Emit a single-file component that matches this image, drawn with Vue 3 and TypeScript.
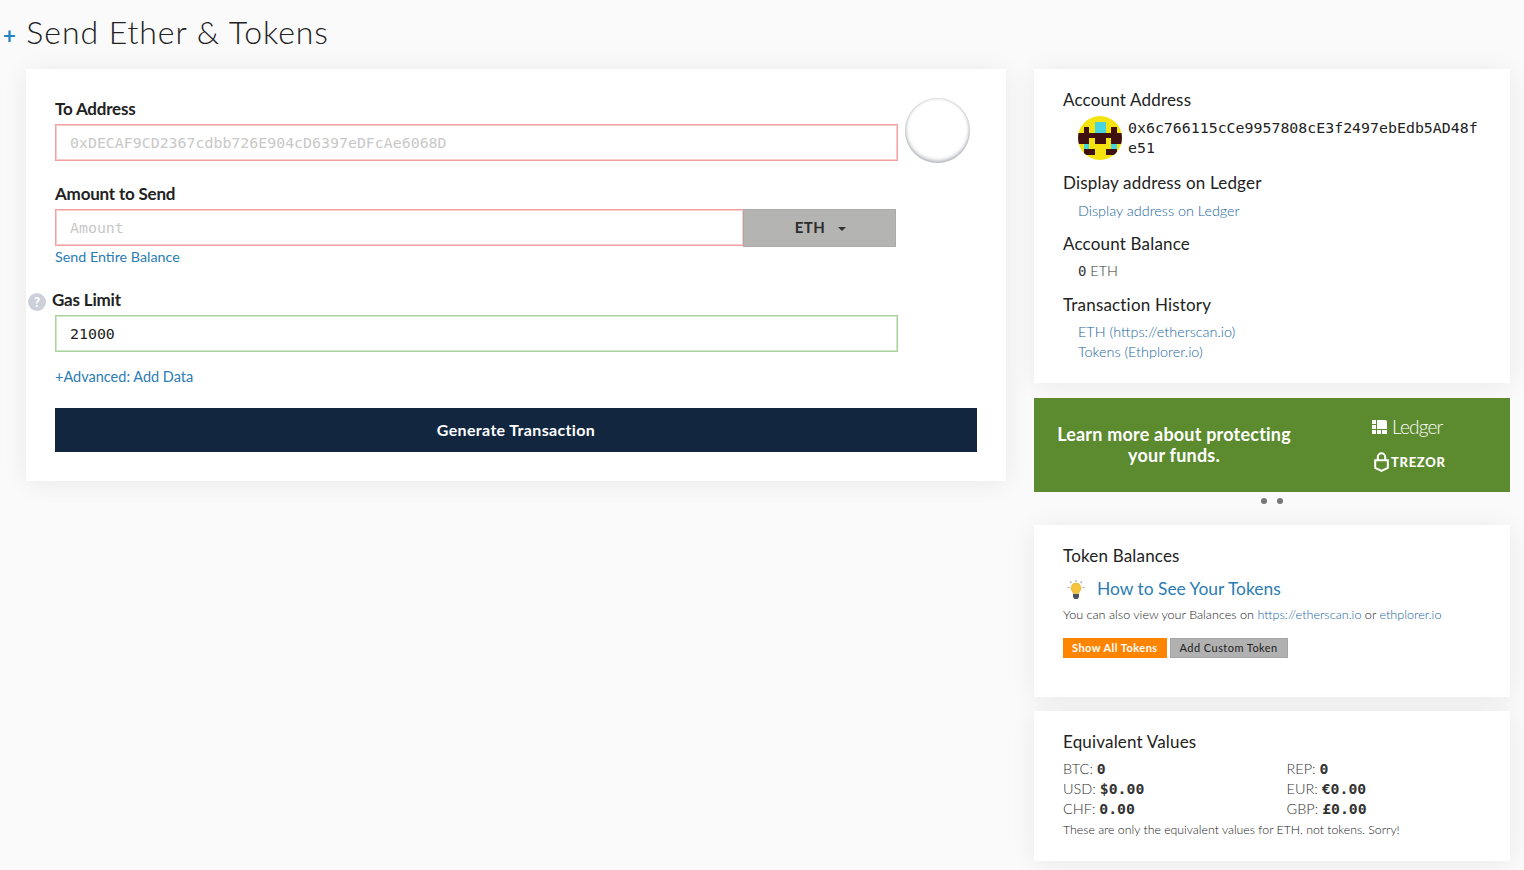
<template>
  <div class="page">
    <h1 class="title"><span class="plus">+</span> Send Ether &amp; Tokens</h1>
    <div class="columns">
      <main class="card send">
        <label class="label">To Address</label>
        <div class="address-row">
          <div class="input bad mono placeholder">0xDECAF9CD2367cdbb726E904cD6397eDFcAe6068D</div>
          <div class="empty-identicon"></div>
        </div>

        <label class="label amount-label">Amount to Send</label>
        <div class="amount-row">
          <div class="input bad mono placeholder grow">Amount</div>
          <button class="unit">ETH <span class="caret"></span></button>
        </div>
        <a class="link entire">Send Entire Balance</a>

        <div class="gas-label">
          <span class="help">?</span>
          <label class="label">Gas Limit</label>
        </div>
        <div class="input good mono">21000</div>
        <a class="link advanced">+Advanced: Add Data</a>

        <button class="generate">Generate Transaction</button>
      </main>

      <aside class="side">
        <section class="card panel account">
          <h5>Account Address</h5>
          <div class="address">
            <svg class="identicon" viewBox="0 0 8 8" shape-rendering="crispEdges">
              <defs><clipPath id="ic"><circle cx="4" cy="4" r="4" /></clipPath></defs>
              <g clip-path="url(#ic)">
                <rect width="8" height="8" fill="#f4e30e" />
                <rect v-for="(c, i) in cells" :key="i" :x="c[0]" :y="c[1]" :width="c[2]" :height="c[3]" :fill="c[4]" />
              </g>
            </svg>
            <span class="mono addr-text">0x6c766115cCe9957808cE3f2497ebEdb5AD48fe51</span>
          </div>
          <h5 class="mt1">Display address on Ledger</h5>
          <p class="indent"><a class="link thin">Display address on Ledger</a></p>
          <h5 class="mt2">Account Balance</h5>
          <p class="indent balance"><b class="mono">0</b> ETH</p>
          <h5 class="mt3">Transaction History</h5>
          <p class="indent hist"><a class="link thin">ETH (https://etherscan.io)</a><br /><a class="link thin">Tokens (Ethplorer.io)</a></p>
        </section>

        <section class="banner">
          <div class="banner-text">Learn more about protecting your funds.</div>
          <div class="banner-logos">
            <div class="ledger">
              <svg width="16" height="14" viewBox="0 0 16 14" fill="#fff">
                <rect x="0" y="0" width="4" height="4" /><rect x="0" y="5" width="4" height="4" /><rect x="0" y="10" width="4" height="4" />
                <rect x="5" y="10" width="4" height="4" /><rect x="10" y="10" width="5" height="4" />
                <path d="M5 0h8a2 2 0 0 1 2 2v7H5z" />
              </svg>
              <span>Ledger</span>
            </div>
            <div class="trezor">
              <svg width="15" height="20" viewBox="0 0 15 20" fill="none" stroke="#fff" stroke-width="2">
                <path d="M3.800 8V5a3.700 3.700 0 0 1 7.400 0v3" />
                <path d="M1.200 8.200h12.600v7.600l-6.300 3-6.300-3z" />
              </svg>
              <span>TREZOR</span>
            </div>
          </div>
        </section>
        <div class="dots"><i></i><i></i></div>

        <section class="card panel tokens">
          <h5>Token Balances</h5>
          <div class="howto">
            <svg class="bulb" width="18" height="20" viewBox="0 0 18 20">
              <g stroke="#a9a9a6" stroke-width="1.200"><path d="M9 0v2M3 1.500l1.500 1.500M15 1.500l-1.500 1.500M0.500 7.500h2M15.500 7.500h2" /></g>
              <path d="M9 3a5 5 0 0 1 3 9v1.500H6V12a5 5 0 0 1 3-9z" fill="#f5c33c" stroke="#d9a92a" stroke-width=".5" />
              <path d="M6 14h6v3l-1.500 2h-3L6 17z" fill="#4a5560" />
            </svg>
            <a class="link howto-link">How to See Your Tokens</a>
          </div>
          <p class="small">You can also view your Balances on <a class="link thin">https://etherscan.io</a> or <a class="link thin">ethplorer.io</a></p>
          <div class="token-btns">
            <button class="btn-orange">Show All Tokens</button>
            <button class="btn-grey">Add Custom Token</button>
          </div>
        </section>

        <section class="card panel equiv">
          <h5>Equivalent Values</h5>
          <ul class="values">
            <li v-for="v in values" :key="v.name">{{ v.name }}: <b class="mono">{{ v.amount }}</b></li>
          </ul>
          <p class="small sorry">These are only the equivalent values for ETH, not tokens. Sorry!</p>
        </section>
      </aside>
    </div>
  </div>
</template>

<script setup lang="ts">
type Cell = [number, number, number, number, string];

const dark = '#3f1010';
const cyan = '#45d6e0';

const cells: Cell[] = [
  [3, 1, 2, 2, cyan],
  [1, 2, 1, 1, dark],
  [6, 2, 1, 1, dark],
  [0, 3, 8, 1, dark],
  [0, 4, 2, 1, dark],
  [3, 4, 2, 1, dark],
  [6, 4, 2, 1, dark],
  [1, 5, 1, 1, cyan],
  [6, 5, 1, 1, cyan],
  [1, 6, 2, 1, dark],
  [5, 6, 2, 1, dark],
];

const values = [
  { name: 'BTC', amount: '0' },
  { name: 'REP', amount: '0' },
  { name: 'USD', amount: '$0.00' },
  { name: 'EUR', amount: '€0.00' },
  { name: 'CHF', amount: '0.00' },
  { name: 'GBP', amount: '£0.00' },
];
</script>

<style>
html,
body {
  margin: 0;
  background: #fafafa;
}
</style>

<style scoped>
.page {
  width: 1524px;
  height: 870px;
  overflow: hidden;
  box-sizing: border-box;
  font-family: Lato, sans-serif;
  color: #333;
  background: #fafafa;
}
.title {
  margin: 0;
  height: 69px;
  padding: 11px 0 0 3px;
  box-sizing: border-box;
  font-size: 32px;
  line-height: 42px;
  font-weight: 300;
  letter-spacing: 0.95px;
  color: #222;
}
.plus {
  color: #1f85c0;
  font-size: 22px;
  font-weight: 700;
}
.columns {
  display: flex;
  align-items: flex-start;
  gap: 28px;
  padding-left: 26px;
}
.card {
  background: #fff;
  box-shadow: 0 2px 24px rgba(0, 0, 0, 0.07);
}
.send {
  width: 980px;
  height: 412px;
  box-sizing: border-box;
  padding: 29px 29px 0;
}
.label {
  display: block;
  font-size: 17px;
  line-height: 22px;
  font-weight: 700;
  letter-spacing: -0.2px;
  color: #222;
}
.mono {
  font-family: "DejaVu Sans Mono", monospace;
}
.input {
  height: 37px;
  box-sizing: border-box;
  width: 843px;
  padding: 0 14px;
  font-size: 14.900px;
  line-height: 37px;
  border: 1px solid #ccc;
  color: #222;
  background: #fff;
}
.placeholder {
  color: #c8c8c8;
}
.bad {
  border-color: #f5a0a0;
  box-shadow: inset 0 0 0 1px rgba(245, 160, 160, 0.55);
}
.good {
  border-color: #a8d39c;
  box-shadow: inset 0 0 0 1px rgba(168, 211, 156, 0.55);
}
.address-row {
  display: flex;
  align-items: flex-start;
  margin-top: 4px;
  height: 37px;
}
.empty-identicon {
  flex: none;
  width: 65px;
  height: 65px;
  margin: -26px 0 0 7px;
  box-sizing: border-box;
  border-radius: 50%;
  background: #fff;
  box-shadow: inset 0 -2px 4px rgba(80, 85, 100, 0.4), inset 0 0 3px rgba(80, 85, 100, 0.35);
}
.amount-label {
  margin-top: 22px;
}
.amount-row {
  display: flex;
  width: 841px;
  margin-top: 4px;
}
.grow {
  flex: 1;
  width: auto;
  border-right: 0;
}
.unit {
  width: 153px;
  height: 38px;
  border: 1px solid #aaa;
  background: #b4b4b2;
  font-family: Lato, sans-serif;
  font-size: 15px;
  font-weight: 700;
  letter-spacing: 0.4px;
  color: #2c2c2c;
  padding: 0 0 2px 2px;
}
.caret {
  display: inline-block;
  margin-left: 9px;
  vertical-align: middle;
  border-top: 4px solid #333;
  border-left: 4px solid transparent;
  border-right: 4px solid transparent;
}
.link {
  color: #2a7cb3;
  text-decoration: none;
}
.thin {
  font-weight: 300;
  color: #1a669e;
}
.entire {
  display: block;
  font-size: 14.300px;
  line-height: 20px;
}
.gas-label {
  display: flex;
  align-items: center;
  gap: 6px;
  margin: 22px 0 4px -27px;
  height: 22px;
}
.help {
  width: 18px;
  height: 18px;
  border-radius: 50%;
  margin-top: 3px;
  background: #ccd0d9;
  color: #fff;
  font-size: 13px;
  font-weight: 900;
  line-height: 18px;
  text-align: center;
}
.advanced {
  display: block;
  font-size: 14.500px;
  line-height: 20px;
  margin-top: 15px;
}
.generate {
  display: block;
  width: 922px;
  height: 44px;
  margin-top: 21px;
  border: 0;
  padding: 0 0 2px;
  background: #132640;
  color: #fff;
  font-family: Lato, sans-serif;
  font-size: 16px;
  font-weight: 700;
  letter-spacing: 0.35px;
}
.side {
  width: 476px;
  flex: none;
}
.panel {
  box-sizing: border-box;
  padding: 20px 29px 0;
}
h5 {
  margin: 0;
  font-size: 17px;
  line-height: 22px;
  font-weight: 400;
  letter-spacing: 0.18px;
  color: #222;
}
p {
  margin: 0;
}
.account {
  height: 314px;
}
.address {
  display: flex;
  align-items: center;
  gap: 6px;
  margin: 5px 0 0 15px;
}
.identicon {
  flex: none;
  width: 44px;
  height: 44px;
}
.addr-text {
  width: 353px;
  font-size: 14.900px;
  line-height: 20px;
  word-break: break-all;
  color: #222;
}
.mt1 {
  margin-top: 12px;
}
.mt2 {
  margin-top: 12px;
}
.mt3 {
  margin-top: 13px;
}
.indent {
  margin: 7px 0 0 15px;
  font-size: 14.400px;
  line-height: 20px;
  font-weight: 300;
}
.indent b {
  font-size: 14px;
}
.balance,
.hist {
  margin-top: 6px;
}
.banner {
  display: flex;
  align-items: center;
  height: 94px;
  margin-top: 15px;
  background: #5c8a2e;
  color: #fff;
}
.banner-text {
  width: 280px;
  box-sizing: border-box;
  padding: 0 18px;
  text-align: center;
  font-size: 18px;
  line-height: 21px;
  font-weight: 700;
  letter-spacing: 0.2px;
}
.banner-logos {
  margin: -2px 0 0 58px;
}
.ledger {
  display: flex;
  align-items: center;
  gap: 4px;
  font-size: 19px;
  font-weight: 300;
  letter-spacing: -0.8px;
  line-height: 22px;
}
.trezor {
  display: flex;
  align-items: center;
  gap: 2px;
  margin: 14px 0 0 2px;
  font-size: 13px;
  font-weight: 900;
  letter-spacing: 0.7px;
}
.dots {
  display: flex;
  justify-content: center;
  gap: 10px;
  height: 33px;
  padding-top: 6px;
  box-sizing: border-box;
}
.dots i {
  width: 6px;
  height: 6px;
  border-radius: 50%;
  background: #777;
}
.tokens {
  height: 172px;
}
.howto {
  display: flex;
  align-items: center;
  gap: 12px;
  margin: 12px 0 0 4px;
  height: 22px;
}
.howto-link {
  margin-top: -4px;
  font-size: 17.400px;
}
.small {
  font-size: 12.600px;
  line-height: 18px;
  font-weight: 300;
  margin-top: 5px;
  color: #222;
}
.token-btns {
  display: flex;
  gap: 3px;
  margin-top: 14px;
}
.token-btns button {
  height: 20px;
  padding: 0 9px 2px;
  font-family: Lato, sans-serif;
  font-size: 11px;
  font-weight: 700;
  letter-spacing: 0.45px;
  border: 0;
}
.btn-orange {
  background: #ff8400;
  color: #fff;
}
.token-btns .btn-grey {
  background: #b1b1b1;
  color: #222;
  border: 1px solid #a6a6a6;
  font-weight: 400;
}
.equiv {
  height: 150px;
  margin-top: 14px;
}
.values {
  list-style: none;
  margin: 6px 0 0;
  padding: 0;
  display: grid;
  grid-template-columns: 223.500px 1fr;
  font-size: 14.500px;
  line-height: 20px;
  font-weight: 300;
}
.values b {
  font-size: 14.800px;
  font-weight: 700;
}
.sorry {
  margin-top: 2px;
  font-size: 12.300px;
}
</style>
